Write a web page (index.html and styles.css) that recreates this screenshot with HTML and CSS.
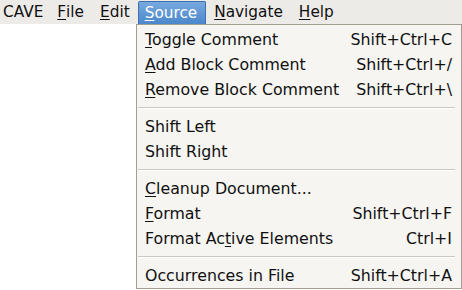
FILE: index.html
```html
<!DOCTYPE html>
<html lang="en">

<head>
    <meta charset="UTF-8">
    <title>CAVE</title>
    <link rel="stylesheet" href="styles.css">
</head>

<body>

    <nav class="menubar">
        <div class="menubar-item app-name">CAVE</div>
        <div class="menubar-item"><u>F</u>ile</div>
        <div class="menubar-item"><u>E</u>dit</div>
        <div class="menubar-item open"><u>S</u>ource</div>
        <div class="menubar-item"><u>N</u>avigate</div>
        <div class="menubar-item"><u>H</u>elp</div>
    </nav>

    <div class="workspace">
        <div class="source-menu">
            <div class="menu-row"><span><u>T</u>oggle Comment</span><span class="accel">Shift+Ctrl+C</span></div>
            <div class="menu-row"><span><u>A</u>dd Block Comment</span><span class="accel">Shift+Ctrl+/</span></div>
            <div class="menu-row"><span><u>R</u>emove Block Comment</span><span class="accel">Shift+Ctrl+\</span></div>
            <div class="separator"></div>
            <div class="menu-row"><span>Shift Left</span></div>
            <div class="menu-row"><span>Shift Right</span></div>
            <div class="separator"></div>
            <div class="menu-row"><span><u>C</u>leanup Document...</span></div>
            <div class="menu-row"><span><u>F</u>ormat</span><span class="accel">Shift+Ctrl+F</span></div>
            <div class="menu-row"><span>Format Ac<u>t</u>ive Elements</span><span class="accel">Ctrl+I</span></div>
            <div class="separator"></div>
            <div class="menu-row"><span>Occurrences in File</span><span class="accel">Shift+Ctrl+A</span></div>
        </div>
    </div>

</body>

</html>
```

FILE: styles.css
```css
body {
    margin: 0;
    background-color: #fff;
    font-family: "DejaVu Sans", sans-serif;
    font-size: 15.3px;
    color: #101010;
}

u {
    text-decoration: underline;
    text-underline-offset: 2px;
    text-decoration-thickness: 1px;
}

.menubar {
    display: flex;
    height: 24px;
    background-color: #edebe8;
}

.menubar-item {
    display: flex;
    align-items: center;
    padding: 0 8px;
    white-space: nowrap;
}

.menubar-item.app-name {
    padding-left: 3px;
    padding-right: 6px;
}

.menubar-item.open {
    margin-top: 1px;
    padding: 0 8px 0 6px;
    color: #fff;
    background: linear-gradient(#78a9df, #4a87cb);
    border: 1px solid #3c6fae;
    border-bottom: none;
    border-radius: 2px 2px 0 0;
}

.workspace {
    display: flex;
    padding-left: 136px;
}

.source-menu {
    width: 324px;
    padding-top: 2px;
    background-color: #f6f5f2;
    border: 1px solid #a29c91;
    font-size: 15.8px;
}

.menu-row {
    display: flex;
    justify-content: space-between;
    align-items: center;
    height: 25px;
    padding: 0 9px 0 8px;
}

.separator {
    margin: 5px 6px 5px 1px;
    height: 0;
    border-top: 1px solid #cdc8bf;
    border-bottom: 1px solid #fff;
}
```
